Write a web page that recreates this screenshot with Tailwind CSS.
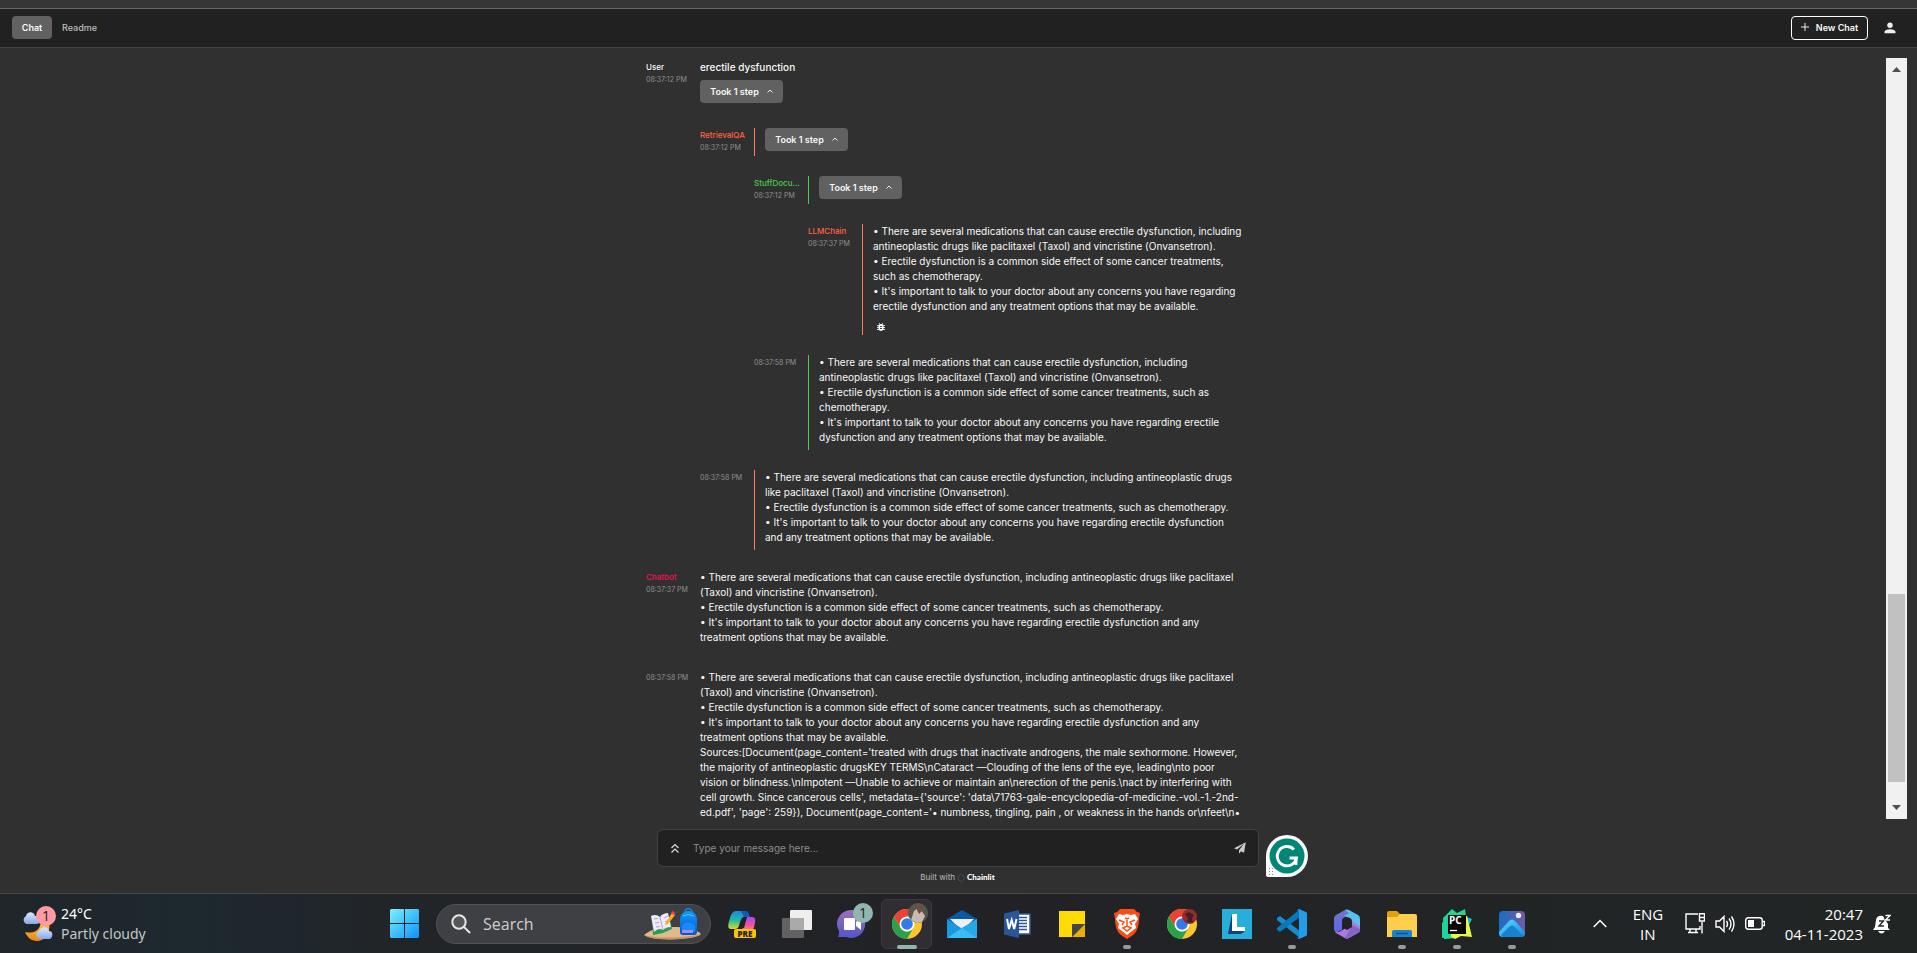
<!DOCTYPE html>
<html lang="en">
<head>
<meta charset="utf-8">
<title>Chainlit</title>
<script src="https://cdn.jsdelivr.net/npm/@tailwindcss/browser@4"></script>
</head>
<body class="flex h-screen flex-col overflow-hidden bg-[#303030] font-['Inter',sans-serif] text-[10px] leading-[15px] text-[#f8f8f8]">

<div class="h-2 shrink-0 bg-[#363636]"></div>
<header class="flex h-10 shrink-0 items-center justify-between border-t border-b border-t-[#666666] border-b-[#424242] bg-[#212121] px-3 pb-px text-[9px] font-medium">
  <nav class="flex items-center">
    <a href="#" class="flex h-[23px] w-10 items-center justify-center rounded bg-[#616161] pb-px font-semibold">Chat</a>
    <a href="#" class="px-[10px] pb-px text-[#bdbdbd]">Readme</a>
  </nav>
  <div class="flex items-center gap-4 pr-[9px]">
    <button class="flex h-6 w-[77px] items-center justify-center gap-[7px] rounded border border-white pb-px font-semibold">
      <svg class="size-2" viewBox="0 0 8 8" stroke="#eee" fill="none"><path d="M4 0v8M0 4h8"/></svg>New Chat
    </button>
    <button aria-label="Account"><svg class="size-3" viewBox="0 0 12 12" fill="#eee"><circle cx="6" cy="3.2" r="2.7"/><path d="M.5 11.3V10C.5 8 4 7.2 6 7.2S11.500 8 11.500 10v1.300z"/></svg></button>
  </div>
</header>

<main class="flex min-h-0 flex-1 flex-col">
  <section class="mt-[10px] mr-[10px] flex min-h-0 flex-1">
    <div class="min-w-0 flex-1 overflow-hidden pl-1">
      <div class="mx-auto flex max-w-[598px] flex-col gap-5 pt-[2px]">

        <article class="flex">
          <div class="w-[54px] shrink-0 pt-px text-[8px] leading-[12px]"><p class="font-medium">User</p><time class="text-[7px] text-[#919191]">08:37:12 PM</time></div>
          <div class="min-w-0 flex-1 pb-[5px]">
            <p class="mb-[5px] font-medium">erectile dysfunction</p>
            <button class="flex h-[23px] w-[83px] items-center justify-center gap-2 rounded bg-[#616161] pb-px text-[9px] font-semibold">Took 1 step<svg class="size-[6px]" viewBox="0 0 6 6" fill="none" stroke="#eee"><path d="M.5 4.500L3 2l2.500 2.500"/></svg></button>
          </div>
        </article>

        <article class="flex pl-[54px]">
          <div class="w-[54px] shrink-0 pt-px text-[8px] leading-[12px]"><p class="font-medium text-[#ff6242]">RetrievalQA</p><time class="text-[7px] text-[#919191]">08:37:12 PM</time></div>
          <div class="min-w-0 flex-1 border-l border-[#ff7f50] pb-[5px] pl-[10px]">
            <button class="flex h-[23px] w-[83px] items-center justify-center gap-2 rounded bg-[#616161] pb-px text-[9px] font-semibold">Took 1 step<svg class="size-[6px]" viewBox="0 0 6 6" fill="none" stroke="#eee"><path d="M.5 4.500L3 2l2.500 2.500"/></svg></button>
          </div>
        </article>

        <article class="flex pl-[108px]">
          <div class="w-[54px] shrink-0 pt-px text-[8px] leading-[12px]"><p class="font-medium text-[#4ccb4c]">StuffDocu...</p><time class="text-[7px] text-[#919191]">08:37:12 PM</time></div>
          <div class="min-w-0 flex-1 border-l border-[#4fc94f] pb-[5px] pl-[10px]">
            <button class="flex h-[23px] w-[83px] items-center justify-center gap-2 rounded bg-[#616161] pb-px text-[9px] font-semibold">Took 1 step<svg class="size-[6px]" viewBox="0 0 6 6" fill="none" stroke="#eee"><path d="M.5 4.500L3 2l2.500 2.500"/></svg></button>
          </div>
        </article>

        <article class="flex pl-[162px]">
          <div class="w-[54px] shrink-0 pt-px text-[8px] leading-[12px]"><p class="font-medium text-[#ff6242]">LLMChain</p><time class="text-[7px] text-[#919191]">08:37:37 PM</time></div>
          <div class="min-w-0 flex-1 border-l border-[#ff7f50] pl-[10px]">
            <p>• There are several medications that can cause erectile dysfunction, including antineoplastic drugs like paclitaxel (Taxol) and vincristine (Onvansetron).</p>
            <p>• Erectile dysfunction is a common side effect of some cancer treatments, such as chemotherapy.</p>
            <p>• It's important to talk to your doctor about any concerns you have regarding erectile dysfunction and any treatment options that may be available.</p>
            <button aria-label="Debug" class="flex h-[21px] items-center pt-[5px] pl-1"><svg class="size-2" viewBox="0 0 8 8"><path d="M0 2.500h8M0 4.500h8M0 6.500h8M2 0l1.200 1.500M6 0L4.800 1.500" stroke="#fff" stroke-width=".8"/><rect x="1.500" y="1" width="5" height="7" rx="2.400" fill="#fff"/><path d="M3 3.500h2M3 5.500h2" stroke="#303030" stroke-width=".9"/></svg></button>
          </div>
        </article>

        <article class="flex pl-[108px]">
          <div class="w-[54px] shrink-0 text-[8px]"><time class="text-[7px] text-[#919191]">08:37:58 PM</time></div>
          <div class="min-w-0 flex-1 border-l border-[#4fc94f] pb-[5px] pl-[10px]">
            <p>• There are several medications that can cause erectile dysfunction, including antineoplastic drugs like paclitaxel (Taxol) and vincristine (Onvansetron).</p>
            <p>• Erectile dysfunction is a common side effect of some cancer treatments, such as chemotherapy.</p>
            <p>• It's important to talk to your doctor about any concerns you have regarding erectile dysfunction and any treatment options that may be available.</p>
          </div>
        </article>

        <article class="flex pl-[54px]">
          <div class="w-[54px] shrink-0 text-[8px]"><time class="text-[7px] text-[#919191]">08:37:58 PM</time></div>
          <div class="min-w-0 flex-1 border-l border-[#ff7f50] pb-[5px] pl-[10px]">
            <p>• There are several medications that can cause erectile dysfunction, including antineoplastic drugs like paclitaxel (Taxol) and vincristine (Onvansetron).</p>
            <p>• Erectile dysfunction is a common side effect of some cancer treatments, such as chemotherapy.</p>
            <p>• It's important to talk to your doctor about any concerns you have regarding erectile dysfunction and any treatment options that may be available.</p>
          </div>
        </article>

        <article class="flex">
          <div class="w-[54px] shrink-0 pt-px text-[8px] leading-[12px]"><p class="font-medium text-[#f0104f]">Chatbot</p><time class="text-[7px] text-[#919191]">08:37:37 PM</time></div>
          <div class="min-w-0 flex-1 pb-[5px]">
            <p>• There are several medications that can cause erectile dysfunction, including antineoplastic drugs like paclitaxel (Taxol) and vincristine (Onvansetron).</p>
            <p>• Erectile dysfunction is a common side effect of some cancer treatments, such as chemotherapy.</p>
            <p>• It's important to talk to your doctor about any concerns you have regarding erectile dysfunction and any treatment options that may be available.</p>
          </div>
        </article>

        <article class="flex">
          <div class="w-[54px] shrink-0 text-[8px]"><time class="text-[7px] text-[#919191]">08:37:58 PM</time></div>
          <div class="min-w-0 flex-1">
            <p>• There are several medications that can cause erectile dysfunction, including antineoplastic drugs like paclitaxel (Taxol) and vincristine (Onvansetron).</p>
            <p>• Erectile dysfunction is a common side effect of some cancer treatments, such as chemotherapy.</p>
            <p>• It's important to talk to your doctor about any concerns you have regarding erectile dysfunction and any treatment options that may be available.</p>
            <p>Sources:[Document(page_content='treated with drugs that inactivate androgens, the male sexhormone. However, the majority of antineoplastic drugsKEY TERMS\nCataract —Clouding of the lens of the eye, leading\nto poor vision or blindness.\nImpotent —Unable to achieve or maintain an\nerection of the penis.\nact by interfering with cell growth. Since cancerous cells', metadata={'source': 'data\71763-gale-encyclopedia-of-medicine.-vol.-1.-2nd-ed.pdf', 'page': 259}), Document(page_content='• numbness, tingling, pain , or weakness in the hands or\nfeet\n•</p>
          </div>
        </article>
      </div>
    </div>
    <div class="flex w-[21px] shrink-0 flex-col items-center bg-[#f1f1f1] py-[9px]">
      <svg class="h-[5px] w-[9px]" viewBox="0 0 9 5" fill="#505050"><path d="M0 5L4.500 0 9 5z"/></svg>
      <div class="w-full grow-[522]"></div>
      <div class="w-[17px] grow-[188] bg-[#c1c1c1]"></div>
      <div class="w-full grow-[23]"></div>
      <svg class="h-[5px] w-[9px]" viewBox="0 0 9 5" fill="#505050"><path d="M0 0h9L4.500 5z"/></svg>
    </div>
  </section>

  <footer class="flex h-[74px] shrink-0 flex-col items-center pt-[10px] pr-px">
    <div class="relative w-full max-w-[602px]">
      <form class="flex h-[38px] items-center rounded-md border border-[#424242] bg-[#212121] px-3">
        <button type="button" aria-label="History"><svg class="h-3 w-[10px]" viewBox="0 0 10 12" fill="none" stroke="#ddd" stroke-width="1.200"><path d="M1.500 6L5 2.500 8.500 6M1.500 10.500L5 7l3.500 3.500"/></svg></button>
        <input type="text" aria-label="Message" placeholder="Type your message here..." class="min-w-0 flex-1 bg-transparent px-[13px] outline-none placeholder:text-[#8c8c8c]">
        <button type="button" aria-label="Send"><svg class="size-3" viewBox="0 0 12 12" fill="#ccc"><path d="M11.800.2L0 6.300l3 1.300 7-5.800-5 6.500v3.500l2-2.500 3 1.500z"/></svg></button>
      </form>
      <button aria-label="Grammarly" class="absolute top-[5px] left-full ml-[6px]"><svg class="size-11" viewBox="0 0 44 44"><path d="M22 1A21 21 0 1 1 22 43H3a2 2 0 0 1-2-2V22A21 21 0 0 1 22 1z" fill="#fafafa"/><circle cx="22" cy="22" r="17.500" fill="#018675"/><path d="M29 15.500A9.700 9.700 0 1 0 31.500 24h-7" fill="none" stroke="#fff" stroke-width="2.800"/><path d="M31 23v8" stroke="#fff" stroke-width="2.800"/><g fill="#888"><path d="M4 34h1v1H4zm3 0h1v1H7zM4 37h1v1H4zm3 0h1v1H7zM4 40h1v1H4zm3 0h1v1H7z"/></g></svg></button>
    </div>
    <p class="flex items-center gap-px pt-[3px] pr-px text-[8px] text-[#bdbdbd]">Built with
      <svg class="size-[10px]" viewBox="0 0 10 10" fill="none" stroke="#505050"><path d="M5 1l4 4-4 4-4-4z" stroke-dasharray="4.600 1" stroke-dashoffset="-.5"/></svg>
      <a href="#" class="font-['Lato',sans-serif] font-black text-white">Chainlit</a></p>
  </footer>
</main>

<div class="grid h-[60px] shrink-0 grid-cols-[1fr_auto_1fr] items-center border-t border-[#484848] bg-linear-to-r from-[#20272a] via-[#222226] to-[#212625] pr-px font-['Open_Sans',sans-serif] text-[14px] leading-5 text-white">
  <div class="flex h-full items-center bg-linear-to-r from-[#20262a] via-[#1d282f] to-transparent pl-[21px]">
    <svg class="h-9 w-[35px]" viewBox="0 0 35 36"><defs><linearGradient id="cl" x2="0" y2="1"><stop stop-color="#dce9ff"/><stop offset="1" stop-color="#86a9e8"/></linearGradient><linearGradient id="mo" x2="0" y2="1"><stop stop-color="#ffc54a"/><stop offset="1" stop-color="#ee8410"/></linearGradient></defs>
      <path d="M28 17c2 10-4 18-12 18-6 0-10-4-12-9 8 2 15-1 16-10z" fill="url(#mo)"/><path d="M5 18a4.500 4.500 0 0 1 0-8c1-5 8-5 9 0 4-1 7 7 2 8z" fill="url(#cl)"/><path d="M18 33a4.300 4.300 0 0 1 0-8c2-5 9-5 10 0 5 0 4 8 0 8z" fill="url(#cl)"/><circle cx="25" cy="10" r="10" fill="#ff99a4"/><text x="25" y="15" font-size="14" text-anchor="middle" fill="#222">1</text></svg>
    <div class="pl-[5px] font-['Noto_Sans',sans-serif]"><p>24°C</p><p class="text-[#c4c7c8]">Partly cloudy</p></div>
  </div>

  <div class="flex items-center">
    <button aria-label="Start" class="flex w-[55px] justify-center"><svg class="size-[29px]" viewBox="0 0 29 29"><defs><linearGradient id="w" x2="1" y2="1"><stop stop-color="#7af1ff"/><stop offset="1" stop-color="#0a93f8"/></linearGradient></defs><path d="M1 0h13v14H0V1zM15 0h13l1 1v13H15zM0 15h14v14H1l-1-1zM15 15h14v13l-1 1H15z" fill="url(#w)"/></svg></button>
    <label class="mr-[3px] ml-1 flex h-10 w-[275px] items-center rounded-full border border-[#505155] bg-[#3f4044] pr-2 pl-[14px] text-[16px]">
      <svg class="size-5 shrink-0" viewBox="0 0 20 20" fill="#55565a" stroke="#e6e6e6" stroke-width="2"><circle cx="8" cy="8" r="6.700"/><path d="M13 13l5.500 5.500" stroke-linecap="round"/></svg>
      <input type="text" aria-label="Search" placeholder="Search" class="min-w-0 flex-1 bg-transparent px-3 outline-none placeholder:text-[#cfcfcf]">
      <svg class="h-8 w-[58px] shrink-0" viewBox="0 0 58 32"><defs><linearGradient id="bp" x2="0" y2="1"><stop stop-color="#109aff"/><stop offset="1" stop-color="#0754c8"/></linearGradient></defs><path d="M0 27c8-7 20-8 30-8s22 2 27 7c-5 6-48 8-57 1z" fill="#dfba8c"/><path d="M0 27c12 4 45 3 57-1-5 6-48 8-57 1z" fill="#c4945e"/><path d="M8 9l9 1 8-3 3 14-9 4-10 2z" fill="#2c9a55"/><path d="M7 8c3-2 7-1 9 1 2-3 5-4 8-4l3 14c-4 0-6 1-8 3-3-2-6-1-9 2z" fill="#efeaf8"/><path d="M16 9l3 13M10 11l4-.5M11 15l4-.5M12 19l4-.5M20 10l4-2M21 14l4-2" stroke="#afa4c8" fill="none"/><path d="M22 14L28 5l3 2-7 9-3 1z" fill="#ffab28"/><path d="M27 5l1.500-2 3 2-1.500 2z" fill="#ef4256"/><path d="M41 4a3.500 3.500 0 0 1 7 0" fill="none" stroke="#078bf2" stroke-width="1.500"/><path d="M36 12c0-12 17-12 17 0v12q0 3-3 3H39q-3 0-3-3z" fill="url(#bp)"/><path d="M38 19c0-6 13-6 13 0v5H38z" fill="#168bff"/><path d="M38 22h11v3H38z" fill="#a88bf7"/><path d="M39 8q5-3 11 0" stroke="#58c7ff" fill="none"/></svg>
    </label>

    <button aria-label="Copilot" class="flex w-[55px] justify-center"><svg class="size-[30px]" viewBox="0 0 30 30"><defs><linearGradient id="c1" x2="0" y2="1"><stop stop-color="#1788e8"/><stop offset=".5" stop-color="#24b9a4"/><stop offset="1" stop-color="#d5da2d"/></linearGradient><linearGradient id="c2" x2="0" y2="1"><stop stop-color="#a44bf0"/><stop offset=".6" stop-color="#f6539a"/><stop offset="1" stop-color="#ff9750"/></linearGradient></defs><path d="M9 2h9c3 0 4 4 5 6h-6c-2 0-3 2-4 5s-1 7-5 7H4c-4 0-3-5-1-11 1-4 3-7 6-7z" fill="url(#c1)"/><path d="M14 2h5c2 0 3 4 4 6h-6z" fill="#1359b8"/><path d="M18 8h7c5 0 3 6 2 10-1 3-2 4-4 4h-8z" fill="url(#c2)"/><path d="M17 8h3l-3 11h-4c2-3 2-11 4-11z" fill="#222226"/><rect x="7" y="20" width="22" height="9" rx="2" fill="#ffc400"/><text x="18" y="27.500" text-anchor="middle" font-size="8" font-weight="800" fill="#222">PRE</text></svg></button>
    <button aria-label="Task view" class="flex w-[55px] justify-center"><svg class="size-[30px]" viewBox="0 0 30 30"><rect x="8" y="1" width="22" height="20" rx="1" fill="#eee"/><rect y="9" width="22" height="20" rx="1" fill="#626262"/><path d="M8 9h14v12H8z" fill="#aaa"/></svg></button>
    <button aria-label="Teams chat" class="relative flex w-[55px] justify-center"><svg class="size-[30px]" viewBox="0 0 30 30"><defs><linearGradient id="t" x2="0" y2="1"><stop stop-color="#9a72ba"/><stop offset="1" stop-color="#5055c8"/></linearGradient></defs><path d="M15 1a14 14 0 1 1-6 27H1c1-2 1-4 1-6A14 14 0 0 1 15 1z" fill="url(#t)"/><rect x="7" y="9" width="11" height="12" rx="1" fill="#fff"/><path d="M19 13l5-4v12l-5-4z" fill="#fff"/></svg><span class="absolute -top-[6px] right-[6px] flex size-5 items-center justify-center rounded-full bg-[#91b5af] text-[14px] text-[#222]">1</span></button>
    <button aria-label="Chrome" class="relative flex h-[50px] w-[55px] items-center justify-center"><span class="absolute inset-x-[2px] inset-y-0 rounded-md border border-[#3b393d] bg-[#302e32]"></span><svg class="relative size-[30px]" viewBox="0 0 30 30"><circle cx="15" cy="15" r="15" fill="#fcc62b"/><path d="M2 7.500A15 15 0 0 1 28 7.500H15L8.500 18.700z" fill="#ea4335"/><path d="M2 7.500L8.500 18.800A7.500 7.500 0 0 0 21.500 18.800L15 30A15 15 0 0 1 2 7.500z" fill="#2aa14b"/><circle cx="15" cy="15" r="7.500" fill="#fff"/><circle cx="15" cy="15" r="5.800" fill="#327be8"/></svg><svg class="absolute top-1 right-[6px] size-5" viewBox="0 0 20 20"><circle cx="10" cy="10" r="10" fill="#55594c"/><path d="M3 17l3-9 3-2 4 1 4 6-3 6-5 1z" fill="#c9bab3"/><path d="M9 1h4l1 7-3 3-2-4z" fill="#754b40"/></svg><span class="absolute bottom-0 h-1 w-5 rounded-full bg-[#91b5af]"></span></button>
    <button aria-label="Mail" class="flex w-[55px] justify-center"><svg class="size-[30px]" viewBox="0 0 30 30"><path d="M0 10L15 1l15 9v8H0z" fill="#075ba5"/><path d="M3 10h24L15 22z" fill="#f0f0f0"/><path d="M0 10l30 19H0z" fill="#1898df"/><path d="M30 10v19H0l15-10z" fill="#39bdf3"/><path d="M15 19l15 10V10z" fill="#25a9e9"/></svg></button>
    <button aria-label="Word" class="flex w-[55px] justify-center"><svg class="size-[30px]" viewBox="0 0 30 30"><path d="M15 5h13v20H15z" fill="#fff" stroke="#2b5797" stroke-width="1.500"/><path d="M16 8.500h9M16 11.500h9M16 14.500h9M16 17.500h9M16 20.500h9" stroke="#2b5797" stroke-width="1.300"/><path d="M2 4.500L17 1v28L2 25.500z" fill="#2a5699"/><path d="M5 10l2 10L9.700 11l2.500 9 2.300-10" fill="none" stroke="#fff" stroke-width="2"/></svg></button>
    <button aria-label="Sticky notes" class="flex w-[55px] justify-center"><svg class="size-[30px]" viewBox="0 0 30 30"><path d="M2 2h26v13l-13 13H2z" fill="#fedb05"/><path d="M28 15v13H15z" fill="#eab000"/><path d="M15 15h13L15 28z" fill="#454545"/></svg></button>
    <button aria-label="Brave" class="relative flex h-[50px] w-[55px] items-center justify-center"><svg class="size-[30px]" viewBox="0 0 30 30"><path d="M8 0h14l3 3 3 1-1 6c0 8-3 14-6 16l-6 4-6-4C6 24 3 18 3 10L2 4l3-1z" fill="#ff4b13"/><path d="M7 5l4 1 4-1 4 1 4-1 3 5-3 5 1 4-4 3-5 4-5-4-4-3 1-4-3-5z" fill="#fff"/><path d="M7 11l5 2-2 3M23 11l-5 2 2 3M13 9l2 1 2-1M15 11v7M11 19l4-2 4 2-4 3z" fill="none" stroke="#ff4b13" stroke-width="1.500"/></svg><span class="absolute bottom-0 h-1 w-2 rounded-full bg-[#9a9a9a]"></span></button>
    <button aria-label="Chrome, second profile" class="relative flex h-[50px] w-[55px] items-center justify-center"><svg class="size-[30px]" viewBox="0 0 30 30"><circle cx="15" cy="15" r="15" fill="#fcc62b"/><path d="M2 7.500A15 15 0 0 1 28 7.500H15L8.500 18.700z" fill="#ea4335"/><path d="M2 7.500L8.500 18.800A7.500 7.500 0 0 0 21.500 18.800L15 30A15 15 0 0 1 2 7.500z" fill="#2aa14b"/><circle cx="15" cy="15" r="7.500" fill="#fff"/><circle cx="15" cy="15" r="5.800" fill="#327be8"/><circle cx="22.500" cy="7.500" r="7.500" fill="#962b2c"/><path d="M18 5l4-2 5 3-2 3 1 5-6-1 1-4z" fill="#411f24"/></svg></button>
    <button aria-label="Lenovo Vantage" class="flex w-[55px] justify-center"><svg class="size-[30px]" viewBox="0 0 30 30"><path d="M0 0h30v30H0z" fill="#27aedb"/><path d="M10 5L6 25h13l4-3-10-3z" fill="#114276"/><path d="M10 5h5v13h8v4H10z" fill="#fff"/></svg></button>
    <button aria-label="Visual Studio Code" class="relative flex h-[50px] w-[55px] items-center justify-center"><svg class="size-[30px]" viewBox="0 0 30 30"><path d="M0 9l3-2 20 15v7L0 11z" fill="#168bd0"/><path d="M0 21l3 2L23 8V0L0 19z" fill="#0877bd"/><path d="M22 0l7 3q1 .5 1 2v20q0 1.500-1 2l-7 3-2-1q2 0 2-2V3q0-2-2-2z" fill="#259ce9"/></svg><span class="absolute bottom-0 h-1 w-2 rounded-full bg-[#9a9a9a]"></span></button>
    <button aria-label="Microsoft 365" class="flex w-[55px] justify-center"><svg class="size-[30px]" viewBox="0 0 30 30"><defs><linearGradient id="m1" x2="0" y2="1"><stop stop-color="#7773c8"/><stop offset="1" stop-color="#5967e8"/></linearGradient></defs><path d="M13 1L4 6Q2 7 2 10v10q0 3 3 3l5-2V12q0-3 3-4l5-3V2q-2-2-5-1z" fill="url(#m1)"/><path d="M13 1q2-1 4 0l9 5q2 1 2 4v11l-8-5v-4q0-2-2-3l-6-2 5-3z" fill="#58bff2"/><path d="M28 20q0 3-2 4l-9 5q-2 1-4 0l-9-5q-1-1-1-2 3 2 6 0l8-5q3-2 3-5l6 4q2 1 2 4z" fill="#ab7adf"/><path d="M20 16l8 4q0 3-2 4l-9 5q-2 1-4 0z" fill="#8564ca"/><path d="M15 10l5 3v5l-5 3-5-3v-5z" fill="#222226"/></svg></button>
    <button aria-label="File Explorer" class="relative flex h-[50px] w-[55px] items-center justify-center"><svg class="size-[30px]" viewBox="0 0 30 30"><path d="M0 4q0-2 2-2h8l3 3h15v8H0z" fill="#e4a00b"/><path d="M0 8h10l3-3h15q2 0 2 2v21H0z" fill="#ffce4c"/><path d="M5 28v-5q0-2 2-2h16q2 0 2 2v5z" fill="#1684d2"/><path d="M9 24.500h12" stroke="#0a518f" stroke-width="1.500"/></svg><span class="absolute bottom-0 h-1 w-2 rounded-full bg-[#9a9a9a]"></span></button>
    <button aria-label="PyCharm" class="relative flex h-[50px] w-[55px] items-center justify-center"><svg class="size-[30px]" viewBox="0 0 30 30"><path d="M1 9l9-9 5 4 8-4 1 7-9 22-13 1z" fill="#21d789"/><path d="M25 8l5 2-3 6z" fill="#08bde9"/><path d="M19 7h6l2 8 3 13-11-1-6 3-7-4z" fill="#e6f64b"/><path d="M0 14l8-8 1 22-9 1z" fill="#1fd49a"/><path d="M6 6h18v19H6z" fill="#080808"/><text x="7" y="14.500" font-size="10" font-weight="700" fill="#fff">PC</text><path d="M8 21.500h7" stroke="#fff" stroke-width="1.300"/></svg><span class="absolute bottom-0 h-1 w-2 rounded-full bg-[#9a9a9a]"></span></button>
    <button aria-label="Photos" class="relative flex h-[50px] w-[55px] items-center justify-center"><svg class="size-[30px]" viewBox="0 0 30 30"><defs><linearGradient id="p1" x2="1"><stop stop-color="#176fc5"/><stop offset="1" stop-color="#7457a6"/></linearGradient><linearGradient id="p2" x2="1" y2="1"><stop stop-color="#5cdcff"/><stop offset="1" stop-color="#148ddd"/></linearGradient></defs><rect x="2" y="2" width="26" height="26" rx="4" fill="url(#p1)"/><path d="M2 23l10-11q3-3 6 0l10 11v1q0 4-4 4H6q-4 0-4-4z" fill="url(#p2)"/><path d="M4 26l8-8q3-3 6 0l8 9-2 1H6z" fill="#1882d1"/><circle cx="21.500" cy="6.500" r="2.700" fill="#e9edff"/></svg><span class="absolute bottom-0 h-1 w-2 rounded-full bg-[#9a9a9a]"></span></button>
  </div>

  <div class="flex items-center justify-end pr-[25px] text-center text-[15px]">
    <button aria-label="Show hidden icons" class="mr-[26px]"><svg class="h-[9px] w-[14px]" viewBox="0 0 14 9" fill="none" stroke="#fff" stroke-width="1.500"><path d="M.7 8L7 1.500 13.300 8"/></svg></button>
    <p class="mr-[22px] w-[30px]">ENG<br>IN</p>
    <svg class="mr-[10px] h-[21px] w-5" viewBox="0 0 20 21" fill="none" stroke="#fff" stroke-width="1.400"><path d="M13 1H1v15h14v-3M5 16v3M11 16v3M3 19.500h10M17 9v11.500"/><path d="M14.500.7h5V8h-5zM14 4.500h6"/></svg>
    <svg class="mr-[10px] h-[18px] w-5" viewBox="0 0 20 18" fill="none" stroke="#fff" stroke-width="1.400"><path d="M1 6h3.500L9 1.500v15L4.500 12H1zM11.500 6q2 3 0 6M14 3.500q4 5.500 0 11M16.500 1.500q5 7.500 0 15"/></svg>
    <svg class="mr-5 h-[13px] w-5" viewBox="0 0 20 13" fill="none" stroke="#fff" stroke-width="1.400"><rect x=".7" y=".7" width="16.500" height="11.600" rx="2.500"/><path d="M18 4.500h1.500v4H18"/><rect x="3" y="3" width="6" height="7" fill="#fff" stroke="none"/></svg>
    <p class="mr-[10px] text-right">20:47<br>04-11-2023</p>
    <svg class="h-5 w-[18px]" viewBox="0 0 18 20"><path d="M3 6q1-5 7-4l5 8v4l2 2H0l2-3zM5 17h7q-3.500 5-7 0z" fill="#fff"/><path d="M6 7h4.500L6 12h5" fill="none" stroke="#222726" stroke-width="1.400"/><path d="M10 0h8v7h-6z" fill="#222726"/><path d="M12.500 1.500H17L12.500 6H17" fill="none" stroke="#fff" stroke-width="1.400"/></svg>
  </div>
</div>
</body>
</html>
